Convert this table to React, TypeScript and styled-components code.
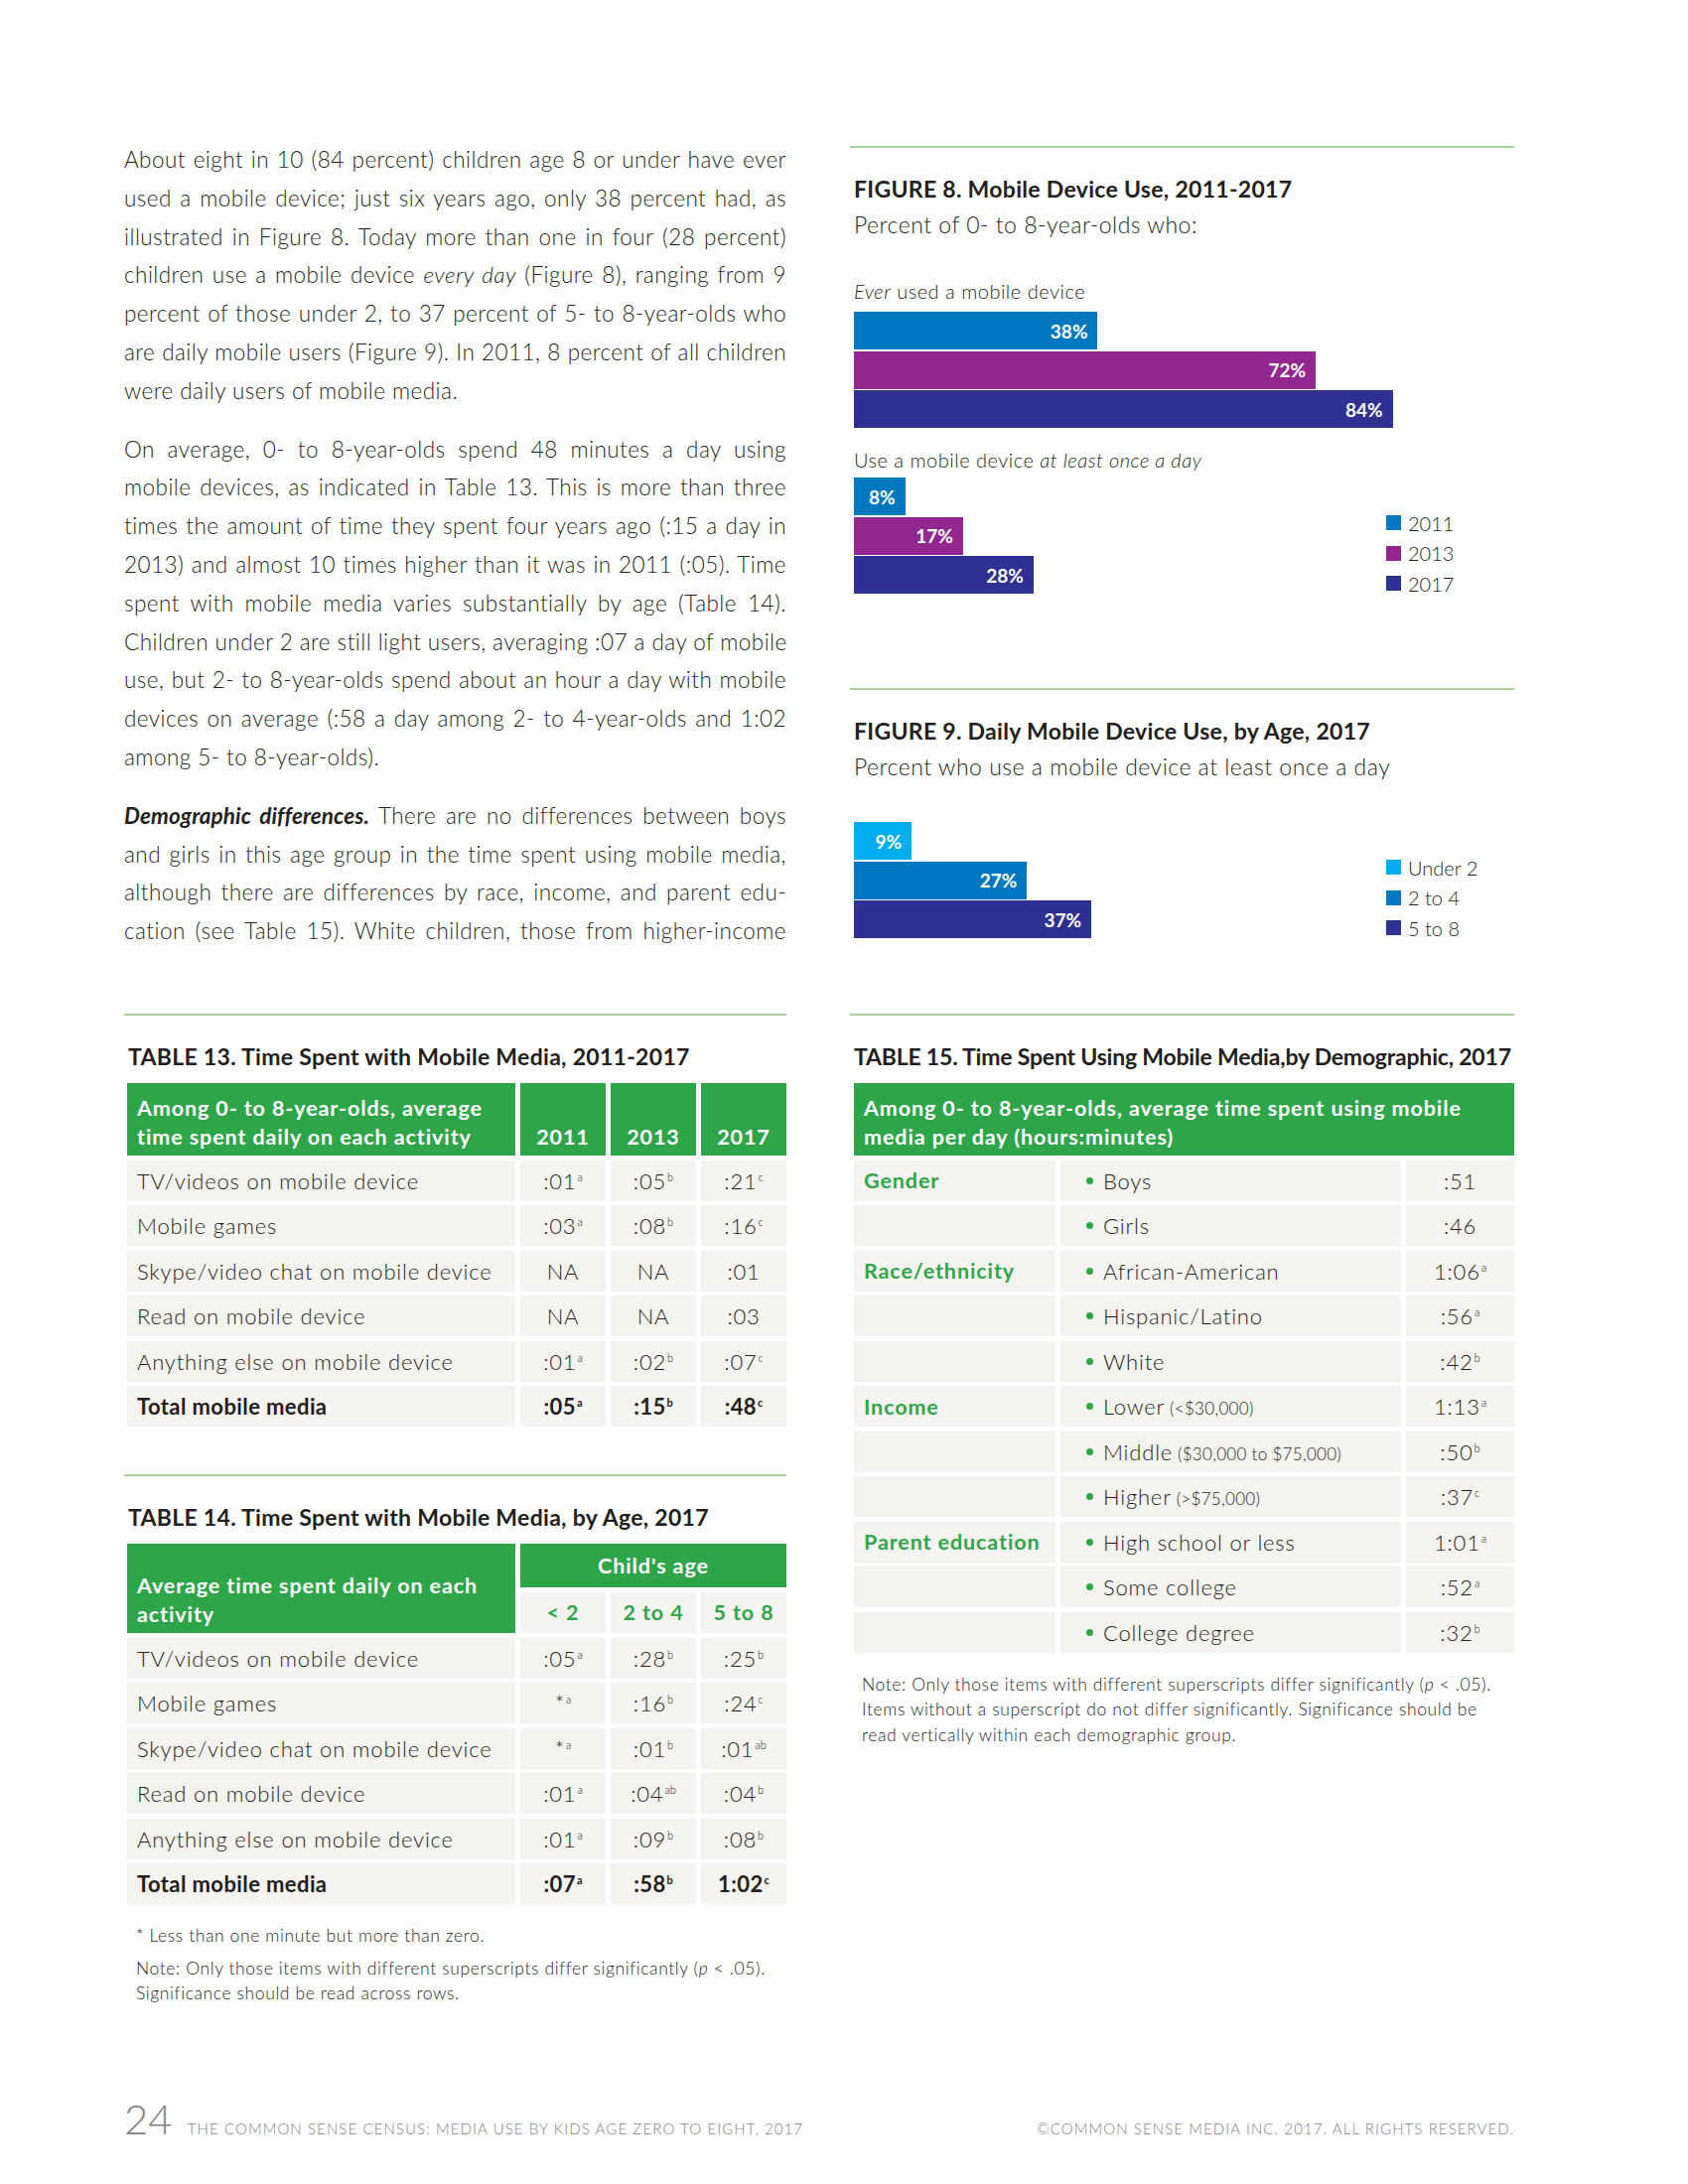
import React from "react";
import styled, { createGlobalStyle } from "styled-components";

const ink = "#231f20";
const green = "#2fa54a";
const rule = "#a9d09b";
const cellBg = "#f5f3ef";
const c2011 = "#0078bf";
const c2013 = "#92278f";
const c2017 = "#2e3192";
const cUnder2 = "#00aeef";

const PX_PER_PCT = 6.46;

const GlobalStyle = createGlobalStyle`
  * { box-sizing: border-box; }
  body {
    margin: 0;
    background: #fff;
    color: ${ink};
    font-family: Lato, "Open Sans", "Liberation Sans", sans-serif;
  }
`;

const Page = styled.div`
  width: 1700px;
  height: 2200px;
  padding: 142px 175px 45px 125px;
  display: flex;
  flex-direction: column;
`;

const Columns = styled.div`
  display: grid;
  grid-template-columns: 667px 669px;
  grid-template-rows: 879px auto;
  column-gap: 64px;
`;

const Stack = styled.div`
  display: flex;
  flex-direction: column;
`;

/* ---------- prose ---------- */

const Prose = styled.div`
  font-size: 22.5px;
  font-weight: 300;
  letter-spacing: 0.45px;
  line-height: 38.8px;
`;

const Para = styled.p`
  margin: 0 0 20px;
`;

const Line = styled.span<{ $last?: boolean }>`
  display: block;
  white-space: nowrap;
  text-align: ${(p) => (p.$last ? "left" : "justify")};
  text-align-last: ${(p) => (p.$last ? "left" : "justify")};
`;

const Lead = styled.b`
  font-weight: 700;
  font-style: italic;
  letter-spacing: 0.1px;
`;

/* ---------- blocks ---------- */

const Block = styled.section<{ $top?: number }>`
  border-top: 2px solid ${rule};
  margin-top: ${(p) => p.$top ?? 0}px;
  padding-top: 26px;
`;

const BlockTitle = styled.h2<{ $tight?: boolean }>`
  margin: 0;
  padding-left: 4px;
  font-size: 23px;
  font-weight: 700;
  line-height: 30px;
  white-space: nowrap;
  letter-spacing: ${(p) => (p.$tight ? "-0.2px" : "0.3px")};
`;

const Subtitle = styled.div`
  margin-top: 6px;
  padding-left: 4px;
  font-size: 23px;
  font-weight: 300;
  letter-spacing: 0.5px;
  line-height: 30px;
`;

const GroupLabel = styled.div<{ $top: number }>`
  margin-top: ${(p) => p.$top}px;
  padding-left: 4px;
  font-size: 20px;
  font-weight: 300;
  letter-spacing: 0.5px;
  line-height: 26px;
`;

const ChartRow = styled.div<{ $top: number }>`
  display: flex;
  align-items: flex-end;
  margin-top: ${(p) => p.$top}px;
`;

const Bars = styled.div<{ $width?: number }>`
  display: flex;
  flex-direction: column;
  gap: 1.5px;
  padding-left: 4px;
  width: ${(p) => (p.$width ? `${p.$width}px` : "auto")};
  flex: none;
`;

const Bar = styled.div<{ $color: string }>`
  height: 38px;
  background: ${(p) => p.$color};
  color: #fff;
  font-size: 19px;
  font-weight: 700;
  display: flex;
  align-items: center;
  justify-content: flex-end;
  padding-right: 10px;
`;

const Legend = styled.ul`
  list-style: none;
  margin: 0 0 -5px;
  padding: 0;
`;

const LegendItem = styled.li`
  display: flex;
  align-items: center;
  gap: 7px;
  height: 30.5px;
  font-size: 20px;
  font-weight: 300;
`;

const Swatch = styled.span<{ $color: string }>`
  width: 15px;
  height: 15px;
  background: ${(p) => p.$color};
`;

/* ---------- tables ---------- */

const Grid = styled.div<{ $cols: string; $rows: string; $inset: number }>`
  display: grid;
  grid-template-columns: ${(p) => p.$cols};
  grid-template-rows: ${(p) => p.$rows};
  column-gap: 5px;
  row-gap: 4.5px;
  margin: 12px 0 0 ${(p) => p.$inset}px;
`;

const HeadCell = styled.div<{ $center?: boolean; $rowSpan?: number; $colSpan?: number; $mid?: boolean }>`
  background: ${green};
  color: #fff;
  font-size: 21.5px;
  font-weight: 700;
  letter-spacing: 0.9px;
  line-height: 28.5px;
  display: flex;
  align-items: ${(p) => (p.$mid ? "center" : "flex-end")};
  justify-content: ${(p) => (p.$center ? "center" : "flex-start")};
  padding: 0 10px ${(p) => (p.$mid ? 0 : 5)}px;
  grid-row: span ${(p) => p.$rowSpan ?? 1};
  grid-column: span ${(p) => p.$colSpan ?? 1};
  white-space: nowrap;
`;

const SubHead = styled.div`
  background: ${cellBg};
  color: ${green};
  font-size: 21.5px;
  font-weight: 700;
  letter-spacing: 0.9px;
  display: flex;
  align-items: center;
  justify-content: center;
`;

const Cell = styled.div<{ $center?: boolean; $bold?: boolean }>`
  background: ${cellBg};
  font-size: 22px;
  font-weight: ${(p) => (p.$bold ? 700 : 300)};
  letter-spacing: ${(p) => (p.$bold ? 0.4 : 0.8)}px;
  display: flex;
  align-items: center;
  justify-content: ${(p) => (p.$center ? "center" : "flex-start")};
  padding: 0 10px;
  white-space: nowrap;
`;

const GroupCell = styled(Cell)`
  color: ${green};
  font-weight: 700;
  font-size: 21.5px;
  letter-spacing: 0.9px;
`;

const ItemCell = styled(Cell)`
  padding-left: 26px;
  gap: 10px;
`;

const Dot = styled.span`
  width: 7px;
  height: 7px;
  border-radius: 50%;
  background: ${green};
  flex: none;
`;

const Small = styled.span`
  font-size: 17px;
  letter-spacing: 0.3px;
`;

const Sup = styled.sup`
  font-size: 11px;
  line-height: 0;
  vertical-align: 0.7em;
  margin-left: 1px;
  font-weight: inherit;
  letter-spacing: 0;
`;

const Notes = styled.div<{ $top: number }>`
  margin-top: ${(p) => p.$top}px;
  padding-left: 12px;
  font-size: 17.5px;
  font-weight: 300;
  letter-spacing: 0.6px;
  line-height: 25.5px;
`;

const NoteLine = styled.p<{ $gap?: number }>`
  margin: 0 0 ${(p) => p.$gap ?? 0}px;
  white-space: nowrap;
`;

/* ---------- footer ---------- */

const Footer = styled.footer`
  margin-top: auto;
  display: flex;
  align-items: baseline;
  justify-content: space-between;
  color: #808285;
  line-height: 1;
`;

const FooterLeft = styled.div`
  display: flex;
  align-items: baseline;
`;

const Folio = styled.span`
  font-size: 42px;
  font-weight: 300;
  margin-right: 15px;
`;

const Running = styled.span`
  font-size: 15px;
  font-weight: 300;
  text-transform: uppercase;
  letter-spacing: 1.1px;
`;

/* ---------- data ---------- */

type Val = [string, string?];

const V = ({ v }: { v: Val }) => (
  <span>
    {v[0]}
    {v[1] && <Sup>{v[1]}</Sup>}
  </span>
);

const para1: React.ReactNode[] = [
  "About eight in 10 (84 percent) children age 8 or under have ever",
  "used a mobile device; just six years ago, only 38 percent had, as",
  "illustrated in Figure 8. Today more than one in four (28 percent)",
  <>children use a mobile device <i>every day</i> (Figure 8), ranging from 9</>,
  "percent of those under 2, to 37 percent of 5- to 8-year-olds who",
  "are daily mobile users (Figure 9). In 2011, 8 percent of all children",
  "were daily users of mobile media.",
];

const para2: React.ReactNode[] = [
  "On average, 0- to 8-year-olds spend 48 minutes a day using",
  "mobile devices, as indicated in Table 13. This is more than three",
  "times the amount of time they spent four years ago (:15 a day in",
  "2013) and almost 10 times higher than it was in 2011 (:05). Time",
  "spent with mobile media varies substantially by age (Table 14).",
  "Children under 2 are still light users, averaging :07 a day of mobile",
  "use, but 2- to 8-year-olds spend about an hour a day with mobile",
  "devices on average (:58 a day among 2- to 4-year-olds and 1:02",
  "among 5- to 8-year-olds).",
];

const para3: React.ReactNode[] = [
  <><Lead>Demographic differences.</Lead> There are no differences between boys</>,
  "and girls in this age group in the time spent using mobile media,",
  "although there are differences by race, income, and parent edu-",
  "cation (see Table 15). White children, those from higher-income",
];

const fig8Ever = [
  { pct: 38, color: c2011 },
  { pct: 72, color: c2013 },
  { pct: 84, color: c2017 },
];
const fig8Daily = [
  { pct: 8, color: c2011 },
  { pct: 17, color: c2013 },
  { pct: 28, color: c2017 },
];
const fig8Legend = [
  { label: "2011", color: c2011 },
  { label: "2013", color: c2013 },
  { label: "2017", color: c2017 },
];
const fig9Bars = [
  { pct: 9, color: cUnder2 },
  { pct: 27, color: c2011 },
  { pct: 37, color: c2017 },
];
const fig9Legend = [
  { label: "Under 2", color: cUnder2 },
  { label: "2 to 4", color: c2011 },
  { label: "5 to 8", color: c2017 },
];

type Row = { label: string; vals: Val[]; total?: boolean };

const table13: Row[] = [
  { label: "TV/videos on mobile device", vals: [[":01", "a"], [":05", "b"], [":21", "c"]] },
  { label: "Mobile games", vals: [[":03", "a"], [":08", "b"], [":16", "c"]] },
  { label: "Skype/video chat on mobile device", vals: [["NA"], ["NA"], [":01"]] },
  { label: "Read on mobile device", vals: [["NA"], ["NA"], [":03"]] },
  { label: "Anything else on mobile device", vals: [[":01", "a"], [":02", "b"], [":07", "c"]] },
  { label: "Total mobile media", vals: [[":05", "a"], [":15", "b"], [":48", "c"]], total: true },
];

const table14: Row[] = [
  { label: "TV/videos on mobile device", vals: [[":05", "a"], [":28", "b"], [":25", "b"]] },
  { label: "Mobile games", vals: [["*", "a"], [":16", "b"], [":24", "c"]] },
  { label: "Skype/video chat on mobile device", vals: [["*", "a"], [":01", "b"], [":01", "ab"]] },
  { label: "Read on mobile device", vals: [[":01", "a"], [":04", "ab"], [":04", "b"]] },
  { label: "Anything else on mobile device", vals: [[":01", "a"], [":09", "b"], [":08", "b"]] },
  { label: "Total mobile media", vals: [[":07", "a"], [":58", "b"], ["1:02", "c"]], total: true },
];

const table15: { group?: string; label: string; note?: string; val: Val }[] = [
  { group: "Gender", label: "Boys", val: [":51"] },
  { label: "Girls", val: [":46"] },
  { group: "Race/ethnicity", label: "African-American", val: ["1:06", "a"] },
  { label: "Hispanic/Latino", val: [":56", "a"] },
  { label: "White", val: [":42", "b"] },
  { group: "Income", label: "Lower", note: "(<$30,000)", val: ["1:13", "a"] },
  { label: "Middle", note: "($30,000 to $75,000)", val: [":50", "b"] },
  { label: "Higher", note: "(>$75,000)", val: [":37", "c"] },
  { group: "Parent education", label: "High school or less", val: ["1:01", "a"] },
  { label: "Some college", val: [":52", "a"] },
  { label: "College degree", val: [":32", "b"] },
];

/* ---------- parts ---------- */

function Paragraph({ lines, runOn }: { lines: React.ReactNode[]; runOn?: boolean }) {
  return (
    <Para>
      {lines.map((l, i) => (
        <Line key={i} $last={!runOn && i === lines.length - 1}>
          {l}
        </Line>
      ))}
    </Para>
  );
}

function BarList({ bars, width }: { bars: { pct: number; color: string }[]; width?: number }) {
  return (
    <Bars $width={width}>
      {bars.map((b) => (
        <Bar key={b.pct} $color={b.color} style={{ width: b.pct * PX_PER_PCT }}>
          {b.pct}%
        </Bar>
      ))}
    </Bars>
  );
}

function ChartLegend({ items }: { items: { label: string; color: string }[] }) {
  return (
    <Legend>
      {items.map((it) => (
        <LegendItem key={it.label}>
          <Swatch $color={it.color} />
          {it.label}
        </LegendItem>
      ))}
    </Legend>
  );
}

function BodyRows({ rows }: { rows: Row[] }) {
  return (
    <>
      {rows.map((r) => (
        <React.Fragment key={r.label}>
          <Cell $bold={r.total}>{r.label}</Cell>
          {r.vals.map((v, i) => (
            <Cell key={i} $center $bold={r.total}>
              <V v={v} />
            </Cell>
          ))}
        </React.Fragment>
      ))}
    </>
  );
}

export default function App() {
  return (
    <>
      <GlobalStyle />
      <Page>
        <Columns>
          <Prose>
            <Paragraph lines={para1} />
            <Paragraph lines={para2} />
            <Paragraph lines={para3} runOn />
          </Prose>

          <Stack>
            <Block $top={5}>
              <BlockTitle>FIGURE 8. Mobile Device Use, 2011-2017</BlockTitle>
              <Subtitle>Percent of 0- to 8-year-olds who:</Subtitle>
              <GroupLabel $top={39}>
                <i>Ever</i> used a mobile device
              </GroupLabel>
              <ChartRow $top={8}>
                <BarList bars={fig8Ever} />
              </ChartRow>
              <GroupLabel $top={19}>
                Use a mobile device <i>at least once a day</i>
              </GroupLabel>
              <ChartRow $top={5}>
                <BarList bars={fig8Daily} width={540} />
                <ChartLegend items={fig8Legend} />
              </ChartRow>
            </Block>

            <Block $top={95}>
              <BlockTitle>FIGURE 9. Daily Mobile Device Use, by Age, 2017</BlockTitle>
              <Subtitle>Percent who use a mobile device at least once a day</Subtitle>
              <ChartRow $top={41}>
                <BarList bars={fig9Bars} width={540} />
                <ChartLegend items={fig9Legend} />
              </ChartRow>
            </Block>
          </Stack>

          <Stack>
            <Block>
              <BlockTitle>TABLE 13. Time Spent with Mobile Media, 2011-2017</BlockTitle>
              <Grid $cols="391px 1fr 1fr 1fr" $rows="73px repeat(6, 41px)" $inset={3}>
                <HeadCell>
                  Among 0- to 8-year-olds, average
                  <br />
                  time spent daily on each activity
                </HeadCell>
                <HeadCell $center>2011</HeadCell>
                <HeadCell $center>2013</HeadCell>
                <HeadCell $center>2017</HeadCell>
                <BodyRows rows={table13} />
              </Grid>
            </Block>

            <Block $top={48}>
              <BlockTitle>TABLE 14. Time Spent with Mobile Media, by Age, 2017</BlockTitle>
              <Grid $cols="391px 1fr 1fr 1fr" $rows="44px 41.5px repeat(6, 41px)" $inset={3}>
                <HeadCell $rowSpan={2}>
                  Average time spent daily on each
                  <br />
                  activity
                </HeadCell>
                <HeadCell $center $colSpan={3} $mid>
                  Child's age
                </HeadCell>
                <SubHead>&lt; 2</SubHead>
                <SubHead>2 to 4</SubHead>
                <SubHead>5 to 8</SubHead>
                <BodyRows rows={table14} />
              </Grid>
              <Notes $top={19}>
                <NoteLine $gap={7}>* Less than one minute but more than zero.</NoteLine>
                <NoteLine>
                  Note: Only those items with different superscripts differ significantly (<i>p</i> &lt; .05).
                </NoteLine>
                <NoteLine>Significance should be read across rows.</NoteLine>
              </Notes>
            </Block>
          </Stack>

          <Stack>
            <Block>
              <BlockTitle $tight>TABLE 15. Time Spent Using Mobile Media,by Demographic, 2017</BlockTitle>
              <Grid $cols="203px 343px 1fr" $rows="73px repeat(11, 41px)" $inset={4}>
                <HeadCell $colSpan={3}>
                  Among 0- to 8-year-olds, average time spent using mobile
                  <br />
                  media per day (hours:minutes)
                </HeadCell>
                {table15.map((r) => (
                  <React.Fragment key={r.label}>
                    <GroupCell>{r.group ?? ""}</GroupCell>
                    <ItemCell>
                      <Dot />
                      <span>
                        {r.label}
                        {r.note && <Small> {r.note}</Small>}
                      </span>
                    </ItemCell>
                    <Cell $center>
                      <V v={r.val} />
                    </Cell>
                  </React.Fragment>
                ))}
              </Grid>
              <Notes $top={19}>
                <NoteLine>
                  Note: Only those items with different superscripts differ significantly (<i>p</i> &lt; .05).
                </NoteLine>
                <NoteLine>
                  Items without a superscript do not differ significantly. Significance should be
                </NoteLine>
                <NoteLine>read vertically within each demographic group.</NoteLine>
              </Notes>
            </Block>
          </Stack>
        </Columns>

        <Footer>
          <FooterLeft>
            <Folio>24</Folio>
            <Running>The Common Sense Census: Media Use by Kids Age Zero to Eight, 2017</Running>
          </FooterLeft>
          <Running>©Common Sense Media Inc. 2017. All rights reserved.</Running>
        </Footer>
      </Page>
    </>
  );
}
